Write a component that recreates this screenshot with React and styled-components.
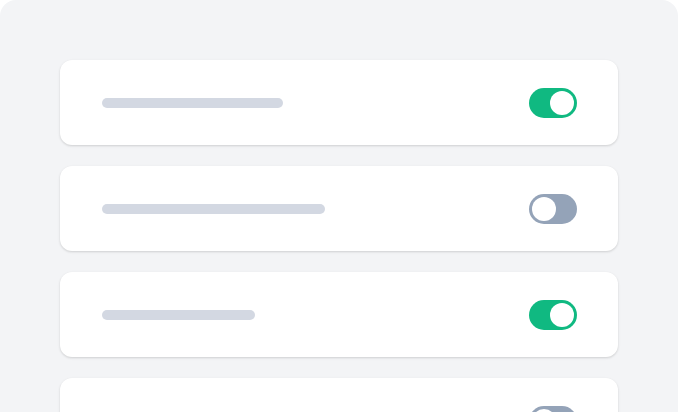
import React from "react";
import styled, { createGlobalStyle } from "styled-components";

const Global = createGlobalStyle`
  html, body { margin: 0; padding: 0; background: #ffffff; }
  body { font-family: "Inter", "Liberation Sans", sans-serif; }
`;

const Frame = styled.div`
  width: 678px;
  height: 412px;
  box-sizing: border-box;
  background: #f3f4f6;
  border-radius: 16px 16px 0 0;
  padding: 60px 60px 0;
  overflow: hidden;
  display: flex;
  flex-direction: column;
  gap: 21px;
`;

const Card = styled.div`
  flex: none;
  height: 85px;
  box-sizing: border-box;
  background: #ffffff;
  border-radius: 12px;
  box-shadow: 0 1px 3px rgba(0, 0, 0, 0.1), 0 1px 2px rgba(0, 0, 0, 0.06);
  display: flex;
  align-items: center;
  justify-content: space-between;
  padding: 0 41px 0 42px;
`;

const Bar = styled.div`
  height: 10px;
  width: ${(p) => p.$w}px;
  border-radius: 5px;
  background: #d3d8e2;
`;

const Toggle = styled.div`
  width: 48px;
  height: 30px;
  box-sizing: border-box;
  border-radius: 15px;
  padding: 3px;
  background: ${(p) => (p.$on ? "#10b981" : "#94a3b8")};
  display: flex;
  justify-content: ${(p) => (p.$on ? "flex-end" : "flex-start")};
`;

const Knob = styled.div`
  width: 24px;
  height: 24px;
  border-radius: 50%;
  background: #ffffff;
`;

const rows = [
  { w: 181, on: true },
  { w: 223, on: false },
  { w: 153, on: true },
  { w: 200, on: false },
];

export default function App() {
  return (
    <>
      <Global />
      <Frame>
        {rows.map((r, i) => (
          <Card key={i}>
            <Bar $w={r.w} />
            <Toggle $on={r.on}>
              <Knob />
            </Toggle>
          </Card>
        ))}
      </Frame>
    </>
  );
}
